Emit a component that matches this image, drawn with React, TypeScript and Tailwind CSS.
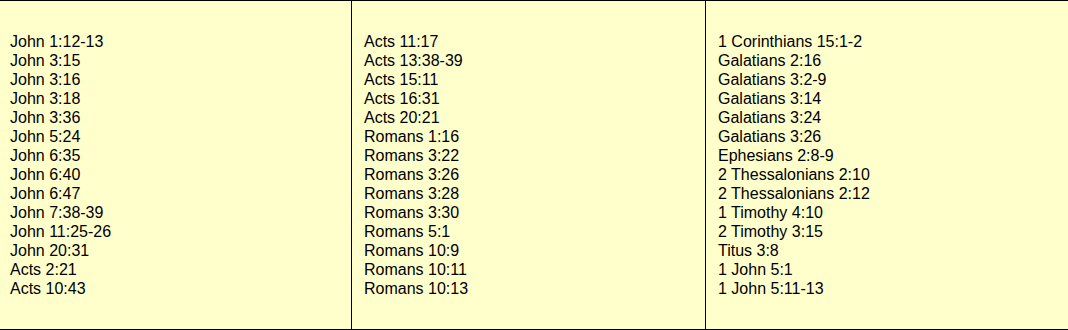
import React from "react";

const col1 = [
  "John 1:12-13",
  "John 3:15",
  "John 3:16",
  "John 3:18",
  "John 3:36",
  "John 5:24",
  "John 6:35",
  "John 6:40",
  "John 6:47",
  "John 7:38-39",
  "John 11:25-26",
  "John 20:31",
  "Acts 2:21",
  "Acts 10:43",
];
const col2 = [
  "Acts 11:17",
  "Acts 13:38-39",
  "Acts 15:11",
  "Acts 16:31",
  "Acts 20:21",
  "Romans 1:16",
  "Romans 3:22",
  "Romans 3:26",
  "Romans 3:28",
  "Romans 3:30",
  "Romans 5:1",
  "Romans 10:9",
  "Romans 10:11",
  "Romans 10:13",
];
const col3 = [
  "1 Corinthians 15:1-2",
  "Galatians 2:16",
  "Galatians 3:2-9",
  "Galatians 3:14",
  "Galatians 3:24",
  "Galatians 3:26",
  "Ephesians 2:8-9",
  "2 Thessalonians 2:10",
  "2 Thessalonians 2:12",
  "1 Timothy 4:10",
  "2 Timothy 3:15",
  "Titus 3:8",
  "1 John 5:1",
  "1 John 5:11-13",
];

function Col({ items }: { items: string[] }) {
  return (
    <ul className="flex flex-col">
      {items.map((t) => (
        <li key={t} className="whitespace-nowrap">
          {t}
        </li>
      ))}
    </ul>
  );
}

export default function App() {
  return (
    <div
      className="flex h-[330px] w-[1068px] border-y border-black bg-[#ffffcc] text-[16px] leading-[19px] text-black"
      style={{ fontFamily: '"Liberation Sans", Arial, sans-serif' }}
    >
      <div className="w-[351px] shrink-0 pl-[10px] pt-[31px]">
        <Col items={col1} />
      </div>
      <div className="w-[354px] shrink-0 border-l border-black pl-3 pt-[31px]">
        <Col items={col2} />
      </div>
      <div className="flex-1 border-l border-black pl-3 pt-[31px]">
        <Col items={col3} />
      </div>
    </div>
  );
}
